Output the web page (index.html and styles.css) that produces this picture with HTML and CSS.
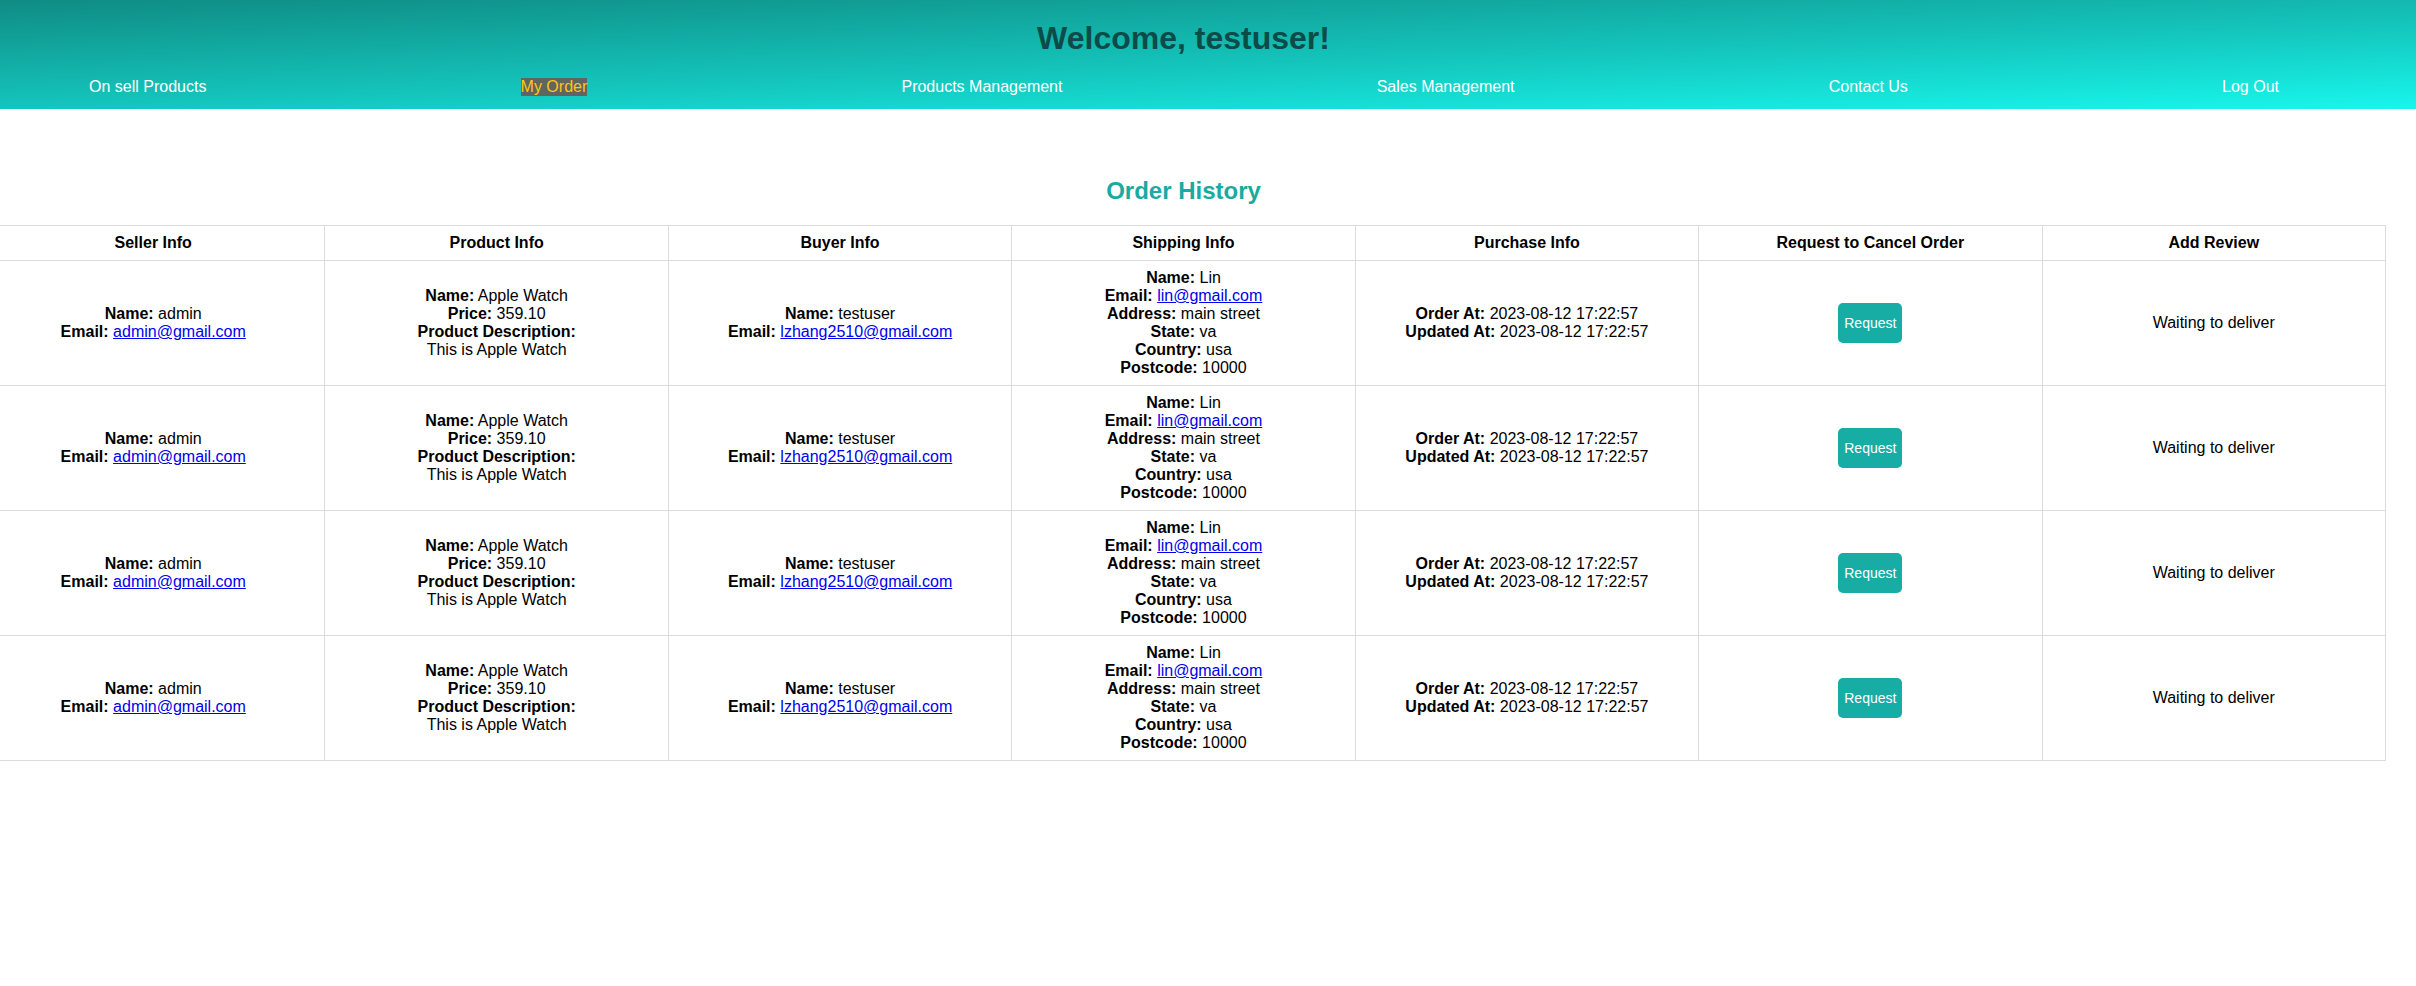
FILE: index.html
```html
<!DOCTYPE html>
<html lang="en">
<head>
<meta charset="utf-8">
<title>My Order</title>
<link rel="stylesheet" href="styles.css">
</head>
<body>
<header class="topbar">
  <div class="wrap">
    <h1 class="welcome">Welcome, testuser!</h1>
    <nav class="nav">
      <a class="nav-link" href="#">On sell Products</a>
      <a class="nav-link active" href="#">My Order</a>
      <a class="nav-link" href="#">Products Management</a>
      <a class="nav-link" href="#">Sales Management</a>
      <a class="nav-link" href="#">Contact Us</a>
      <a class="nav-link" href="#">Log Out</a>
    </nav>
  </div>
</header>
<main class="wrap orders">
  <h2 class="orders-title">Order History</h2>
  <table class="orders-table">
    <thead>
      <tr>
        <th>Seller Info</th>
        <th>Product Info</th>
        <th>Buyer Info</th>
        <th>Shipping Info</th>
        <th>Purchase Info</th>
        <th>Request to Cancel Order</th>
        <th>Add Review</th>
      </tr>
    </thead>
    <tbody>
      <tr>
        <td><b>Name:</b> admin<br><b>Email:</b> <a href="#">admin@gmail.com</a></td>
        <td><b>Name:</b> Apple Watch<br><b>Price:</b> 359.10<br><b>Product Description:</b><br>This is Apple Watch</td>
        <td><b>Name:</b> testuser<br><b>Email:</b> <a href="#">lzhang2510@gmail.com</a></td>
        <td><b>Name:</b> Lin<br><b>Email:</b> <a href="#">lin@gmail.com</a><br><b>Address:</b> main street<br><b>State:</b> va<br><b>Country:</b> usa<br><b>Postcode:</b> 10000</td>
        <td><b>Order At:</b> 2023-08-12 17:22:57<br><b>Updated At:</b> 2023-08-12 17:22:57</td>
        <td><button class="req-btn" type="button">Request</button></td>
        <td>Waiting to deliver</td>
      </tr>
      <tr>
        <td><b>Name:</b> admin<br><b>Email:</b> <a href="#">admin@gmail.com</a></td>
        <td><b>Name:</b> Apple Watch<br><b>Price:</b> 359.10<br><b>Product Description:</b><br>This is Apple Watch</td>
        <td><b>Name:</b> testuser<br><b>Email:</b> <a href="#">lzhang2510@gmail.com</a></td>
        <td><b>Name:</b> Lin<br><b>Email:</b> <a href="#">lin@gmail.com</a><br><b>Address:</b> main street<br><b>State:</b> va<br><b>Country:</b> usa<br><b>Postcode:</b> 10000</td>
        <td><b>Order At:</b> 2023-08-12 17:22:57<br><b>Updated At:</b> 2023-08-12 17:22:57</td>
        <td><button class="req-btn" type="button">Request</button></td>
        <td>Waiting to deliver</td>
      </tr>
      <tr>
        <td><b>Name:</b> admin<br><b>Email:</b> <a href="#">admin@gmail.com</a></td>
        <td><b>Name:</b> Apple Watch<br><b>Price:</b> 359.10<br><b>Product Description:</b><br>This is Apple Watch</td>
        <td><b>Name:</b> testuser<br><b>Email:</b> <a href="#">lzhang2510@gmail.com</a></td>
        <td><b>Name:</b> Lin<br><b>Email:</b> <a href="#">lin@gmail.com</a><br><b>Address:</b> main street<br><b>State:</b> va<br><b>Country:</b> usa<br><b>Postcode:</b> 10000</td>
        <td><b>Order At:</b> 2023-08-12 17:22:57<br><b>Updated At:</b> 2023-08-12 17:22:57</td>
        <td><button class="req-btn" type="button">Request</button></td>
        <td>Waiting to deliver</td>
      </tr>
      <tr>
        <td><b>Name:</b> admin<br><b>Email:</b> <a href="#">admin@gmail.com</a></td>
        <td><b>Name:</b> Apple Watch<br><b>Price:</b> 359.10<br><b>Product Description:</b><br>This is Apple Watch</td>
        <td><b>Name:</b> testuser<br><b>Email:</b> <a href="#">lzhang2510@gmail.com</a></td>
        <td><b>Name:</b> Lin<br><b>Email:</b> <a href="#">lin@gmail.com</a><br><b>Address:</b> main street<br><b>State:</b> va<br><b>Country:</b> usa<br><b>Postcode:</b> 10000</td>
        <td><b>Order At:</b> 2023-08-12 17:22:57<br><b>Updated At:</b> 2023-08-12 17:22:57</td>
        <td><button class="req-btn" type="button">Request</button></td>
        <td>Waiting to deliver</td>
      </tr>
    </tbody>
  </table>
</main>
</body>
</html>
```

FILE: styles.css
```css
html, body {
  margin: 0;
  padding: 0;
  background: #ffffff;
  font-family: "Liberation Sans", Arial, Helvetica, sans-serif;
  font-size: 16px;
  color: #000000;
}

.wrap {
  width: 2405px;
  margin-left: -19px;
  box-sizing: border-box;
}

.topbar {
  background: linear-gradient(178deg, #0f8c84 0%, #14c4bb 55%, #18f6ec 100%);
  padding: 20px 0 13px;
}

.welcome {
  margin: 0;
  text-align: center;
  font-size: 32px;
  font-weight: bold;
  color: #0c4b48;
}

.nav {
  display: flex;
  justify-content: space-between;
  padding: 0 107px 0 108px;
  margin-top: 21px;
}

.nav-link {
  color: #ffffff;
  text-decoration: none;
  font-size: 16px;
}

.nav-link.active {
  color: #ffc414;
  background: #5f655f;
}

.orders {
  padding-top: 68px;
}

.orders-title {
  margin: 0 0 20px;
  text-align: center;
  font-size: 24px;
  font-weight: bold;
  color: #19aaa1;
}

.orders-table {
  width: 2405px;
  table-layout: fixed;
  border-collapse: collapse;
  line-height: 18px;
}

.orders-table th,
.orders-table td {
  border: 1px solid #dcdcdc;
  padding: 8px;
  text-align: center;
  vertical-align: middle;
}

.orders-table th {
  font-weight: bold;
}

.orders-table a {
  color: #0000ee;
  text-decoration: underline;
}

.req-btn {
  background: #17ada5;
  color: #ffffff;
  border: none;
  border-radius: 5px;
  font-family: "Liberation Sans", Arial, Helvetica, sans-serif;
  font-size: 14px;
  line-height: 16px;
  padding: 12px 6px;
  cursor: pointer;
}
```
